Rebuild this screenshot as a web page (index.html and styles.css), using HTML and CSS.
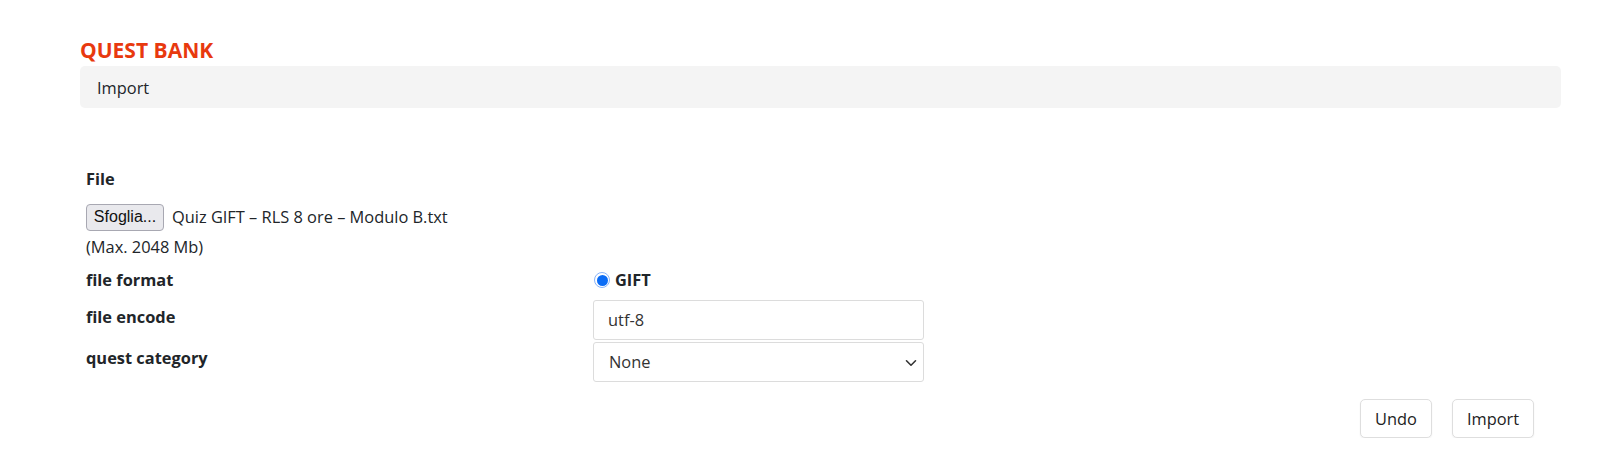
FILE: index.html
```html
<!DOCTYPE html>
<html lang="it">
<head>
<meta charset="utf-8">
<title>Quest Bank - Import</title>
<link rel="stylesheet" href="styles.css">
</head>
<body>
<div class="page">
  <h1 class="title">QUEST BANK</h1>
  <div class="breadcrumb">Import</div>

  <form class="form">
    <div class="label">File</div>
    <div class="file-row">
      <span class="file-btn">Sfoglia...</span>
      <span class="file-name">Quiz GIFT – RLS 8 ore – Modulo B.txt</span>
    </div>
    <div class="hint">(Max. 2048 Mb)</div>

    <div class="row row-format">
      <div class="label">file format</div>
      <label class="radio-wrap">
        <span class="radio"><span class="radio-dot"></span></span>
        <span class="radio-text">GIFT</span>
      </label>
    </div>

    <div class="row row-encode">
      <div class="label label-pad">file encode</div>
      <div class="control">utf-8</div>
    </div>

    <div class="row row-category">
      <div class="label label-pad2">quest category</div>
      <div class="control select">
        <span>None</span>
        <svg class="chev" width="12" height="8" viewBox="0 0 12 8"><path d="M1.5 1.8 L6 6.2 L10.5 1.8" fill="none" stroke="#333" stroke-width="1.6" stroke-linecap="round" stroke-linejoin="round"/></svg>
      </div>
    </div>

    <div class="actions">
      <span class="btn btn-undo">Undo</span>
      <span class="btn btn-import">Import</span>
    </div>
  </form>
</div>
</body>
</html>
```
FILE: styles.css
```css
* { box-sizing: border-box; }
html, body { margin: 0; padding: 0; background: #fff; }
body {
  font-family: "Open Sans", "Noto Sans", sans-serif;
  font-size: 16.4px;
  line-height: 24px;
  color: #212529;
}
.page {
  margin-left: 80px;
  width: 1481px;
  padding-top: 38px;
}
.title {
  margin: 0;
  font-size: 21px;
  line-height: 25px;
  font-weight: 700;
  color: #e8390e;
  letter-spacing: 0;
}
.breadcrumb {
  margin-top: 3px;
  height: 42px;
  background: #f4f4f4;
  border-radius: 5px;
  padding: 10px 17px 8px;
  line-height: 24px;
  color: #212529;
}
.form {
  margin-top: 59px;
  padding-left: 6px;
}
.label {
  font-weight: 700;
  line-height: 24px;
}
.file-row {
  margin-top: 12px;
  display: flex;
  align-items: center;
  height: 28px;
}
.file-btn {
  display: inline-flex;
  align-items: center;
  justify-content: center;
  width: 78px;
  height: 27px;
  font-family: "Liberation Sans", Arial, sans-serif;
  font-size: 16px;
  color: #111;
  background: #e9e9ed;
  border: 1px solid #a8a8b2;
  border-radius: 4px;
}
.file-name {
  margin-left: 8px;
}
.hint {
  margin-top: 4px;
  line-height: 24px;
}
.row {
  display: grid;
  grid-template-columns: 507px 331px;
}
.row-format {
  margin-top: 9px;
  height: 24px;
}
.radio-wrap {
  display: flex;
  align-items: center;
  gap: 5px;
  font-weight: 700;
}
.radio {
  width: 16px;
  height: 16px;
  border-radius: 50%;
  border: 1.5px solid #8ab4f8;
  display: flex;
  align-items: center;
  justify-content: center;
  background: #fff;
  margin-left: 1px;
}
.radio-dot {
  width: 11px;
  height: 11px;
  border-radius: 50%;
  background: #0b6cf5;
}
.row-encode {
  margin-top: 8px;
}
.label-pad { padding-top: 5px; }
.label-pad2 { padding-top: 4px; }
.control {
  height: 40px;
  border: 1px solid #dcdcdc;
  border-radius: 3px;
  padding: 7px 14px;
  line-height: 24px;
  color: #333;
  background: #fff;
}
.row-category {
  margin-top: 2px;
}
.select {
  display: flex;
  align-items: center;
  justify-content: space-between;
  padding-right: 6px;
  padding-left: 15px;
}
.chev { margin-top: 2px; }
.actions {
  margin-top: 17px;
  display: flex;
  justify-content: flex-end;
  gap: 20px;
  padding-right: 27px;
}
.btn {
  height: 39px;
  display: inline-flex;
  align-items: center;
  justify-content: center;
  border: 1px solid #dedede;
  border-radius: 5px;
  background: #fff;
  color: #222;
  box-shadow: 0 1px 2px rgba(0,0,0,0.06);
}
.btn-undo { width: 72px; }
.btn-import { width: 82px; }
```
